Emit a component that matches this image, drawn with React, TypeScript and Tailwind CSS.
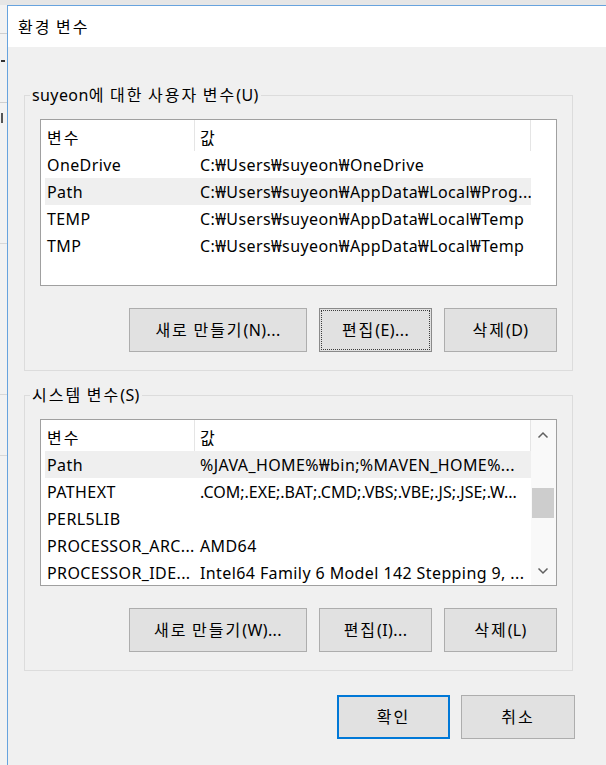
import React from "react";

const W = "\u20A9";

function K({ t }: { t: string }) {
  const parts = t.split(/([\uAC00-\uD7A3]+)/);
  return (
    <span className="whitespace-pre">
      {parts.map((p, i) =>
        /[\uAC00-\uD7A3]/.test(p) ? (
          <span key={i} className="tracking-[2px]">
            {p}
          </span>
        ) : (
          <React.Fragment key={i}>{p}</React.Fragment>
        )
      )}
    </span>
  );
}

type Row = { name: string; value: string; hl?: boolean; tight?: boolean };

const userRows: Row[] = [
  { name: "OneDrive", value: `C:${W}Users${W}suyeon${W}OneDrive` },
  { name: "Path", value: `C:${W}Users${W}suyeon${W}AppData${W}Local${W}Prog...`, hl: true },
  { name: "TEMP", value: `C:${W}Users${W}suyeon${W}AppData${W}Local${W}Temp` },
  { name: "TMP", value: `C:${W}Users${W}suyeon${W}AppData${W}Local${W}Temp` },
];

const sysRows: Row[] = [
  { name: "Path", value: `%JAVA_HOME%${W}bin;%MAVEN_HOME%...`, hl: true },
  { name: "PATHEXT", value: ".COM;.EXE;.BAT;.CMD;.VBS;.VBE;.JS;.JSE;.W...", tight: true },
  { name: "PERL5LIB", value: "" },
  { name: "PROCESSOR_ARC...", value: "AMD64" },
  { name: "PROCESSOR_IDE...", value: "Intel64 Family 6 Model 142 Stepping 9, ..." },
];

function Header() {
  return (
    <div className="flex h-[31px] w-[486px] shrink-0">
      <div className="w-[150px] shrink-0 border-r border-[#e5e5e5] pl-[2px] pt-[8px] leading-[20px]">
        <K t="변수" />
      </div>
      <div className="flex-1 border-r border-[#e5e5e5] pl-[5px] pt-[8px] leading-[20px]">
        <K t="값" />
      </div>
    </div>
  );
}

function Rows({ rows }: { rows: Row[] }) {
  return (
    <>
      {rows.map((r, i) => (
        <div
          key={i}
          className={`flex h-[27px] w-[486px] shrink-0 items-center whitespace-nowrap ${r.hl ? "bg-[#efefef]" : ""}`}
        >
          <div className="w-[150px] shrink-0 overflow-hidden pl-[2px] leading-[20px]">{r.name}</div>
          <div
            className={`flex-1 overflow-hidden pl-[5px] leading-[20px] ${r.tight ? "tracking-[0px]" : ""}`}
          >
            {r.value}
          </div>
        </div>
      ))}
    </>
  );
}

function Btn({ t, w, focus, def }: { t: string; w: string; focus?: boolean; def?: boolean }) {
  return (
    <div
      className={`relative flex h-[44px] items-center justify-center bg-[#e1e1e1] ${w} ${
        def ? "border-2 border-[#0078d7]" : focus ? "border border-[#8a8a8a]" : "border border-[#adadad]"
      }`}
    >
      {focus && <div className="pointer-events-none absolute inset-[1px] border border-dotted border-[#3c3c3c]" />}
      <span className="whitespace-nowrap leading-[20px]">
        <K t={t} />
      </span>
    </div>
  );
}

function Group({ label, children }: { label: string; children: React.ReactNode }) {
  return (
    <fieldset className="w-[549px] border border-[#dcdcdc]">
      <legend className="ml-[5px] px-[2px] text-[16px] leading-[20px]">
        <K t={label} />
      </legend>
      <div className="px-[15px] pb-[18px] pt-[14px]">{children}</div>
    </fieldset>
  );
}

function Chevron({ up }: { up?: boolean }) {
  return (
    <svg width="12" height="8" viewBox="0 0 12 8">
      <path
        d={up ? "M1.5 6.5 L6 2 L10.5 6.5" : "M1.5 1.5 L6 6 L10.5 1.5"}
        fill="none"
        stroke="#606060"
        strokeWidth="1.5"
      />
    </svg>
  );
}

export default function App() {
  return (
    <div className="flex h-[765px] w-[606px] flex-col overflow-hidden bg-[#e8e8e8] font-['Noto_Sans','Noto_Sans_CJK_KR',sans-serif] text-[16px] tracking-[0.4px] text-black">
      <div className="h-[5px] shrink-0 bg-[#e6e6e6]" />
      <div className="flex min-h-0 flex-1">
        <div className="flex w-[7px] shrink-0 flex-col bg-[#f2f2f2]">
          <div className="mt-[28px] h-[1px] bg-[#cfcfcf]" />
          <div className="ml-[1px] mt-[26px] h-[2px] w-[4px] bg-[#333]" />
          <div className="mt-[40px] h-[1px] bg-[#cfcfcf]" />
          <div className="ml-[1px] mt-[10px] h-[10px] w-[2px] bg-[#555]" />
          <div className="mt-[120px] h-[1px] bg-[#d8d8d8]" />
          <div className="mt-[150px] h-[1px] bg-[#d8d8d8]" />
          <div className="mt-[60px] h-[1px] bg-[#d8d8d8]" />
        </div>
        <div className="flex min-w-0 flex-1 flex-col border-l border-t border-[#67a3de]">
          <div className="flex h-[41px] shrink-0 items-center bg-white pl-[10px] text-[16px]">
            <K t="환경 변수" />
          </div>
          <div className="flex flex-1 flex-col bg-[#f0f0f0] pl-[16px] pt-[38px]">
            <Group label="suyeon에 대한 사용자 변수(U)">
              <div className="flex h-[167px] flex-col border border-[#a0a0a0] bg-white pl-[4px]">
                <Header />
                <Rows rows={userRows} />
              </div>
              <div className="mt-[22px] flex justify-end gap-[12px]">
                <Btn w="w-[178px]" t="새로 만들기(N)..." />
                <Btn w="w-[113px]" t="편집(E)..." focus />
                <Btn w="w-[113px]" t="삭제(D)" />
              </div>
            </Group>
            <div className="h-[14px]" />
            <Group label="시스템 변수(S)">
              <div className="flex h-[167px] border border-[#a0a0a0] bg-white">
                <div className="flex min-w-0 flex-1 flex-col overflow-hidden pl-[4px]">
                  <Header />
                  <Rows rows={sysRows} />
                </div>
                <div className="flex w-[25px] shrink-0 flex-col bg-[#f9f9f9]">
                  <div className="flex h-[30px] items-center justify-center pr-[1px]">
                    <Chevron up />
                  </div>
                  <div className="flex-1">
                    <div className="ml-[1px] mt-[38px] h-[30px] w-[22px] bg-[#cdcdcd]" />
                  </div>
                  <div className="flex h-[28px] items-center justify-center pr-[1px]">
                    <Chevron />
                  </div>
                </div>
              </div>
              <div className="mt-[22px] flex justify-end gap-[12px]">
                <Btn w="w-[178px]" t="새로 만들기(W)..." />
                <Btn w="w-[113px]" t="편집(I)..." />
                <Btn w="w-[113px]" t="삭제(L)" />
              </div>
            </Group>
            <div className="mt-[24px] flex w-[551px] justify-end gap-[11px]">
              <Btn w="w-[113px]" t="확인" def />
              <Btn w="w-[114px]" t="취소" />
            </div>
          </div>
        </div>
      </div>
    </div>
  );
}
